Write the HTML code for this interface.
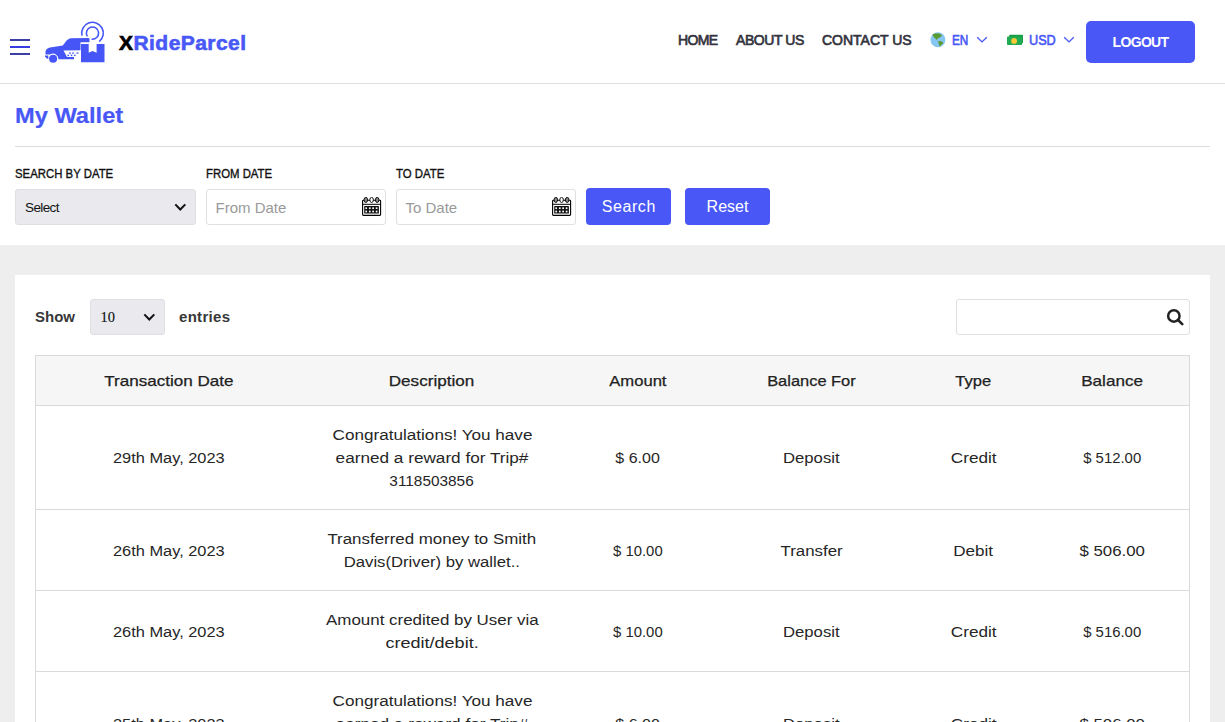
<!DOCTYPE html>
<html>
<head>
<meta charset="utf-8">
<style>
*{box-sizing:border-box;margin:0;padding:0}
html,body{width:1225px;height:722px;overflow:hidden;background:#fff;font-family:"Liberation Sans",sans-serif;color:#111}
.abs{position:absolute}
#header{position:absolute;left:0;top:0;width:1225px;height:84px;border-bottom:1px solid #e0e0e0;background:#fff}
.burger{position:absolute;left:10px;width:20px;height:2px;background:#3b3fc4}
.logo-text{position:absolute;left:119px;top:29.6px;font-size:21px;font-weight:bold;color:#4858f6;letter-spacing:0.45px;line-height:26px;white-space:nowrap;-webkit-text-stroke:0.6px #4858f6}
.logo-text b{color:#000;-webkit-text-stroke:0.7px #000}
.nav{position:absolute;top:32px;font-size:14px;font-weight:normal;-webkit-text-stroke:0.65px #33333d;color:#33333d;line-height:16px;white-space:nowrap}
.lang{-webkit-text-stroke:0.6px #4857f6}
.lang{color:#4857f6}
.logout{position:absolute;left:1086px;top:21px;width:109px;height:42px;background:#4857f6;border-radius:5px;color:#fff;font-weight:bold;font-size:14px;text-align:center;line-height:42px;letter-spacing:-0.65px}
h1{position:absolute;left:15px;top:103px;transform:scaleX(1.075);transform-origin:0 0;-webkit-text-stroke:0.2px #4857f6;font-size:22px;font-weight:bold;color:#4857f6;line-height:26px;white-space:nowrap}
.hr{position:absolute;left:15px;top:146px;width:1195px;height:1px;background:#dcdcdc}
.lbl{position:absolute;top:167.3px;font-size:12.3px;letter-spacing:0px;transform:scaleX(0.925);transform-origin:0 0;font-weight:normal;-webkit-text-stroke:0.35px #111;color:#111;line-height:14px;white-space:nowrap}
.sel{position:absolute;top:189px;height:36px;background:#e9e9ee;border:1px solid #dedee3;border-radius:3px}
.inp{position:absolute;top:189px;height:36px;width:180px;background:#fff;border:1px solid #e0e0e0;border-radius:3px}
.ph{position:absolute;left:8.5px;top:9px;font-size:15px;color:#999;line-height:18px;white-space:nowrap}
.btn{position:absolute;top:188px;width:85px;height:37px;background:#4857f6;border-radius:4px;color:#fff;font-size:16px;text-align:center;line-height:37px}
#grey{position:absolute;left:0;top:245px;width:1225px;height:477px;background:#eeeeee}
#card{position:absolute;left:15px;top:275px;width:1195px;height:447px;background:#fff}
.show{position:absolute;top:308px;font-size:15px;font-weight:bold;color:#383838;line-height:18px}
table{position:absolute;left:35px;top:355px;width:1154px;border-collapse:collapse;table-layout:fixed;font-size:15px;color:#262626;border:1px solid #dadada}
th{background:#f6f6f6;font-weight:normal;-webkit-text-stroke:0.25px #111;height:50px;border-bottom:1px solid #dadada;padding:0}
td:nth-child(6),th:nth-child(6){padding-right:3.5px}td,th{padding-right:1px}
td{text-align:center;line-height:23px;font-size:15.5px;padding:17px 1px 17px 0;border-top:1px solid #dadada}
</style>
</head>
<body>
<div id="header">
  <div class="burger" style="top:39px;background:#3c40a6"></div>
  <div class="burger" style="top:46px;background:#383ce0"></div>
  <div class="burger" style="top:53px;background:#3c40a6"></div>
  <svg class="abs" style="left:40px;top:18px" width="70" height="50" viewBox="40 18 70 50">
    <g fill="#4656f6">
      <path d="M45.5,51.5 C46,49 48,47.8 50,47.5 L62.8,45.6 C65,43 67,38.5 71,38.2 L88.5,38 Q89.5,38 89.5,39 L89.5,42.2 L80.5,42.2 L80.5,50.3 L63.5,50.6 L67,57 L74,57 L74,59.3 L58.4,59.3 L58.4,58.8 A5.3,5.3 0 0 0 50.15,54.4 L45.5,54.4 Z"/>
      <path d="M45,55.6 L48.3,55.6 L48.3,59.2 Q46.5,58.8 45,56.5 Z"/>
      <circle cx="53.1" cy="58.8" r="4"/>
      <rect x="69.2" y="52.3" width="1.5" height="1.5"/><rect x="72.3" y="52.3" width="1.5" height="1.5"/><rect x="76.5" y="52.5" width="2" height="1.2"/>
      <rect x="67.5" y="54.6" width="1.5" height="1.5"/><rect x="70.8" y="54.6" width="1.5" height="1.5"/><rect x="74.1" y="54.6" width="1.5" height="1.5"/>
      <path d="M81,44 L88.7,44 L88.7,52.7 L92.6,51 L96.6,52.7 L96.6,44 L104.5,44 L104.5,62.2 L81,62.2 Z"/>
    </g>
    <g fill="none" stroke="#4656f6" stroke-width="1.6">
      <path d="M82,35.6 A10.8,10.8 0 1 1 99.2,41.6"/>
      <path d="M87.4,36.4 A6.1,6.1 0 1 1 91.6,39.1"/>
    </g>
  </svg>
  <div class="logo-text"><b>X</b>RideParcel</div>
  <div class="nav" style="left:678px;letter-spacing:-0.67px">HOME</div>
  <div class="nav" style="left:736px;letter-spacing:-0.42px">ABOUT US</div>
  <div class="nav" style="left:822px;letter-spacing:0px">CONTACT US</div>
  <svg class="abs" style="left:930px;top:32px" width="16" height="16" viewBox="0 0 16 16">
    <circle cx="7.9" cy="7.8" r="7.45" fill="#86c6f2"/>
    <path d="M2.4,2.6 L5,1.6 L9,1.5 L11.3,2.6 L11.9,4.1 L10,5.3 L7.8,6.4 L6.6,7.9 L5.6,6.8 L3.8,5.3 Z M6.6,7.9 L8.5,9.1 L7.8,8.8 Z M8.4,9.1 L11,9.3 L12.8,10 L13.2,11.3 L11.2,13.1 L9.6,14.9 L9.3,13 L8.4,11 Z" fill="#5b9a32"/>
  </svg>
  <div class="nav lang" style="left:951.5px;transform:scaleX(0.84);transform-origin:0 0">EN</div>
  <svg class="abs" style="left:976px;top:36px" width="12" height="8" viewBox="0 0 12 8"><path d="M1.2,1.3 L6,5.9 L10.8,1.3" fill="none" stroke="#4857f6" stroke-width="1.4"/></svg>
  <svg class="abs" style="left:1006px;top:34px" width="18" height="12" viewBox="0 0 18 12">
    <rect x="3.2" y="0.85" width="13.8" height="8.35" rx="0.8" fill="#199a45"/>
    <rect x="1" y="2.5" width="15.1" height="8.5" rx="0.8" fill="#20aa52"/>
    <circle cx="8.1" cy="6.9" r="2.9" fill="#fbc935"/>
  </svg>
  <div class="nav lang" style="left:1028.5px;transform:scaleX(0.905);transform-origin:0 0">USD</div>
  <svg class="abs" style="left:1063px;top:36px" width="12" height="8" viewBox="0 0 12 8"><path d="M1.2,1.3 L6,5.9 L10.8,1.3" fill="none" stroke="#4857f6" stroke-width="1.4"/></svg>
  <div class="logout">LOGOUT</div>
</div>
<h1>My Wallet</h1>
<div class="hr"></div>
<div class="lbl" style="left:15px">SEARCH BY DATE</div>
<div class="lbl" style="left:206px">FROM DATE</div>
<div class="lbl" style="left:396px">TO DATE</div>
<div class="sel" style="left:15px;width:181px">
  <div class="abs" style="left:9px;top:9.7px;font-size:13.5px;line-height:16px;color:#111;letter-spacing:-0.6px">Select</div>
  <svg class="abs" style="left:157.5px;top:13px" width="13" height="9" viewBox="0 0 13 9"><path d="M1.3,1.4 L6.3,6.5 L11.3,1.4" fill="none" stroke="#111" stroke-width="2"/></svg>
</div>
<div class="inp" style="left:206px"><div class="ph">From Date</div>
  <svg class="abs" style="left:154px;top:7px" width="21" height="20" viewBox="361 197 21 20">
    <rect x="362.6" y="200.2" width="18" height="15.2" rx="0.8" fill="none" stroke="#000" stroke-width="1.1"/>
    <line x1="362.6" y1="204.3" x2="380.6" y2="204.3" stroke="#000" stroke-width="1"/>
    <ellipse cx="365.8" cy="199.9" rx="1.75" ry="2.6" fill="#888" stroke="#000" stroke-width="0.9"/>
    <ellipse cx="371.6" cy="199.9" rx="1.75" ry="2.6" fill="#fff" stroke="#000" stroke-width="0.9"/>
    <ellipse cx="377.2" cy="199.9" rx="1.75" ry="2.6" fill="#888" stroke="#000" stroke-width="0.9"/>
    <rect x="364.2" y="206.1" width="14.7" height="7.5" rx="0.6" fill="#111"/>
    <g fill="#fff"><rect x="365.35" y="207.35" width="1.7" height="1.7"/><rect x="368.95" y="207.35" width="1.7" height="1.7"/><rect x="372.25" y="207.35" width="1.7" height="1.7"/><rect x="375.75" y="207.35" width="1.7" height="1.7"/>
    <rect x="365.35" y="210.65" width="1.7" height="1.7"/><rect x="368.95" y="210.65" width="1.7" height="1.7"/><rect x="372.25" y="210.65" width="1.7" height="1.7"/><rect x="375.75" y="210.65" width="1.7" height="1.7"/></g>
  </svg>
</div>
<div class="inp" style="left:396px"><div class="ph">To Date</div>
  <svg class="abs" style="left:154px;top:7px" width="21" height="20" viewBox="361 197 21 20">
    <rect x="362.6" y="200.2" width="18" height="15.2" rx="0.8" fill="none" stroke="#000" stroke-width="1.1"/>
    <line x1="362.6" y1="204.3" x2="380.6" y2="204.3" stroke="#000" stroke-width="1"/>
    <ellipse cx="365.8" cy="199.9" rx="1.75" ry="2.6" fill="#888" stroke="#000" stroke-width="0.9"/>
    <ellipse cx="371.6" cy="199.9" rx="1.75" ry="2.6" fill="#fff" stroke="#000" stroke-width="0.9"/>
    <ellipse cx="377.2" cy="199.9" rx="1.75" ry="2.6" fill="#888" stroke="#000" stroke-width="0.9"/>
    <rect x="364.2" y="206.1" width="14.7" height="7.5" rx="0.6" fill="#111"/>
    <g fill="#fff"><rect x="365.35" y="207.35" width="1.7" height="1.7"/><rect x="368.95" y="207.35" width="1.7" height="1.7"/><rect x="372.25" y="207.35" width="1.7" height="1.7"/><rect x="375.75" y="207.35" width="1.7" height="1.7"/>
    <rect x="365.35" y="210.65" width="1.7" height="1.7"/><rect x="368.95" y="210.65" width="1.7" height="1.7"/><rect x="372.25" y="210.65" width="1.7" height="1.7"/><rect x="375.75" y="210.65" width="1.7" height="1.7"/></g>
  </svg>
</div>
<div class="btn" style="left:586px;letter-spacing:0.6px;text-indent:0.6px">Search</div>
<div class="btn" style="left:685px">Reset</div>
<div id="grey"></div>
<div id="card"></div>
<div class="show" style="left:35px">Show</div>
<div class="sel" style="left:90px;top:299px;width:75px">
  <div class="abs" style="left:9.5px;top:8.5px;font-family:'Liberation Serif',serif;font-size:14.5px;line-height:16px;color:#111;-webkit-text-stroke:0.15px #111">10</div>
  <svg class="abs" style="left:52px;top:13px" width="13" height="9" viewBox="0 0 13 9"><path d="M1.3,1.4 L6.3,6.5 L11.3,1.4" fill="none" stroke="#111" stroke-width="2"/></svg>
</div>
<div class="show" style="left:179px;letter-spacing:0.3px">entries</div>
<div class="inp" style="left:956px;top:299px;width:234px">
  <svg class="abs" style="left:204px;top:4px" width="25" height="25" viewBox="1161 304 25 25">
    <circle cx="1173.85" cy="315.95" r="5.7" fill="none" stroke="#222" stroke-width="2.5"/>
    <line x1="1178.2" y1="320.3" x2="1182.3" y2="324.1" stroke="#222" stroke-width="2.6" stroke-linecap="round"/>
  </svg>
</div>
<table>
<colgroup><col style="width:268px"><col style="width:258px"><col style="width:153px"><col style="width:195px"><col style="width:129px"><col style="width:151px"></colgroup>
<tr><th><span style="display:inline-block;transform:scaleX(1.1375)">Transaction Date</span></th><th><span style="display:inline-block;transform:scaleX(1.1395)">Description</span></th><th><span style="display:inline-block;transform:scaleX(1.1081)">Amount</span></th><th><span style="display:inline-block;transform:scaleX(1.0955)">Balance For</span></th><th><span style="display:inline-block;transform:scaleX(1.1010)">Type</span></th><th><span style="display:inline-block;transform:scaleX(1.1402)">Balance</span></th></tr>
<tr><td><span id="t0_0_0" style="display:inline-block;transform:scaleX(1.0569)">29th May, 2023</span></td><td><span id="t0_1_0" style="display:inline-block;transform:scaleX(1.1041)">Congratulations! You have</span><br><span id="t0_1_1" style="display:inline-block;transform:scaleX(1.1079)">earned a reward for Trip#</span><br><span id="t0_1_2" style="display:inline-block;transform:scaleX(0.9924)">3118503856</span></td><td><span id="t0_2_0" style="display:inline-block;transform:scaleX(1.0327)">$ 6.00</span></td><td><span id="t0_3_0" style="display:inline-block;transform:scaleX(1.0770)">Deposit</span></td><td><span id="t0_4_0" style="display:inline-block;transform:scaleX(1.1078)">Credit</span></td><td><span id="t0_5_0" style="display:inline-block;transform:scaleX(0.9614)">$ 512.00</span></td></tr>
<tr><td><span id="t1_0_0" style="display:inline-block;transform:scaleX(1.0569)">26th May, 2023</span></td><td><span id="t1_1_0" style="display:inline-block;transform:scaleX(1.0897)">Transferred money to Smith</span><br><span id="t1_1_1" style="display:inline-block;transform:scaleX(1.0768)">Davis(Driver) by wallet..</span></td><td><span id="t1_2_0" style="display:inline-block;transform:scaleX(0.9592)">$ 10.00</span></td><td><span id="t1_3_0" style="display:inline-block;transform:scaleX(1.0870)">Transfer</span></td><td><span id="t1_4_0" style="display:inline-block;transform:scaleX(1.1027)">Debit</span></td><td><span id="t1_5_0" style="display:inline-block;transform:scaleX(1.0857)">$ 506.00</span></td></tr>
<tr><td><span id="t2_0_0" style="display:inline-block;transform:scaleX(1.0569)">26th May, 2023</span></td><td><span id="t2_1_0" style="display:inline-block;transform:scaleX(1.0925)">Amount credited by User via</span><br><span id="t2_1_1" style="display:inline-block;transform:scaleX(1.1632)">credit/debit.</span></td><td><span id="t2_2_0" style="display:inline-block;transform:scaleX(0.9592)">$ 10.00</span></td><td><span id="t2_3_0" style="display:inline-block;transform:scaleX(1.0770)">Deposit</span></td><td><span id="t2_4_0" style="display:inline-block;transform:scaleX(1.1078)">Credit</span></td><td><span id="t2_5_0" style="display:inline-block;transform:scaleX(0.9614)">$ 516.00</span></td></tr>
<tr><td><span id="t3_0_0" style="display:inline-block;transform:scaleX(1.0569)">25th May, 2023</span></td><td><span id="t3_1_0" style="display:inline-block;transform:scaleX(1.1041)">Congratulations! You have</span><br><span id="t3_1_1" style="display:inline-block;transform:scaleX(1.1079)">earned a reward for Trip#</span><br><span id="t3_1_2" style="display:inline-block;transform:scaleX(0.9924)">3118503856</span></td><td><span id="t3_2_0" style="display:inline-block;transform:scaleX(1.0327)">$ 6.00</span></td><td><span id="t3_3_0" style="display:inline-block;transform:scaleX(1.0770)">Deposit</span></td><td><span id="t3_4_0" style="display:inline-block;transform:scaleX(1.1078)">Credit</span></td><td><span id="t3_5_0" style="display:inline-block;transform:scaleX(1.0857)">$ 506.00</span></td></tr>
</table>
</body>
</html>
